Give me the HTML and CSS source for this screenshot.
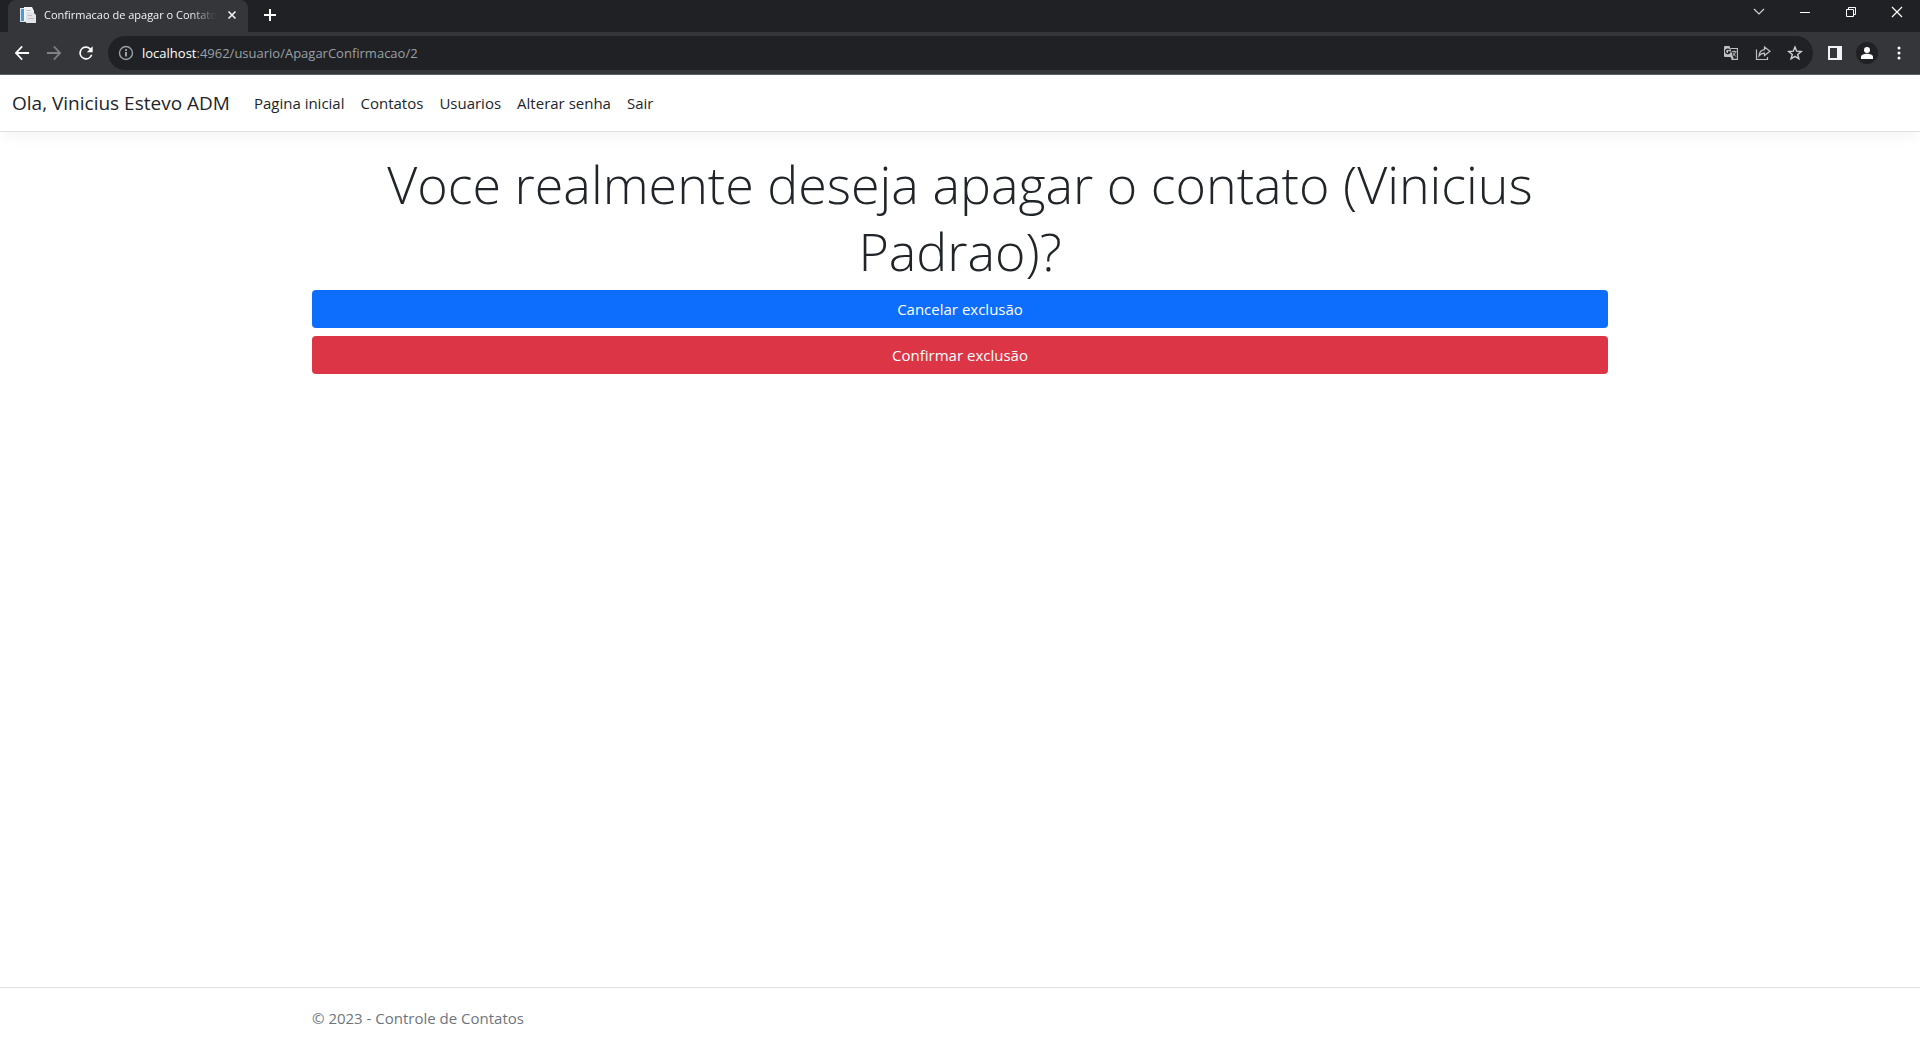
FILE: index.html
```html
<!DOCTYPE html>
<html lang="pt-BR">
<head>
<meta charset="utf-8">
<meta name="viewport" content="width=device-width, initial-scale=1">
<title>Confirmacao de apagar o Contato</title>
<link rel="stylesheet" href="styles.css">
</head>
<body>
<div class="browser">
  <div class="tabstrip">
    <div class="tab">
      <svg class="favicon" width="16" height="16" viewBox="0 0 16 16" aria-hidden="true"><path fill="#d5e3ee" d="M0 1h6v14H0z"/><path fill="#4d9bd6" d="M1 2h3v12H1z"/><path fill="#f4f4f6" d="M4 0h8l2 4v10H4z"/><path fill="#e3e3e8" d="M6 5h7l3 3v8H6z"/><path fill="#bfc1c9" d="M6 3h5v1H6zM8 8h4v1H8zM8 11h6v1H8z"/></svg>
      <span class="tab-title">Confirmacao de apagar o Contato</span>
      <button class="icon-btn tab-close" type="button" aria-label="Fechar guia"><svg width="16" height="16" viewBox="0 0 16 16"><path d="M4.500 4.500l7 7M11.500 4.500l-7 7" stroke="#f1f3f4" stroke-width="1.600" fill="none"/></svg></button>
    </div>
    <button class="icon-btn new-tab" type="button" aria-label="Nova guia"><svg width="16" height="16" viewBox="0 0 16 16"><path d="M8 2v12M2 8h12" stroke="#fff" stroke-width="2" fill="none"/></svg></button>
    <div class="window-controls">
      <button class="icon-btn" type="button" aria-label="Pesquisar guias"><svg width="12" height="12" viewBox="0 0 12 12"><path d="M1 3l5 5 5-5" stroke="#d0d1d3" stroke-width="1.200" fill="none"/></svg></button>
      <button class="icon-btn" type="button" aria-label="Minimizar"><svg width="12" height="12" viewBox="0 0 12 12"><path d="M1 6.500h10" stroke="#fff" fill="none"/></svg></button>
      <button class="icon-btn" type="button" aria-label="Restaurar"><svg width="12" height="12" viewBox="0 0 12 12"><path d="M1.500 3.500h7v7h-7zM3.500 3.500v-2h7v7h-2" stroke="#fff" fill="none"/></svg></button>
      <button class="icon-btn" type="button" aria-label="Fechar"><svg width="12" height="12" viewBox="0 0 12 12"><path d="M1 1l10 10M11 1L1 11" stroke="#fff" stroke-width="1.200" fill="none"/></svg></button>
    </div>
  </div>
  <div class="toolbar">
    <button class="icon-btn tool" type="button" aria-label="Voltar"><svg width="20" height="20" viewBox="0 0 24 24"><path fill="#fff" d="M20.500 10.800H7.300l5.600-5.900L11.500 3.400 3.300 12l8.200 8.600 1.400-1.500-5.600-5.900h13.200z"/></svg></button>
    <button class="icon-btn tool" type="button" aria-label="Avançar" disabled><svg width="20" height="20" viewBox="0 0 24 24"><path fill="#7f8184" d="M3.500 10.800h13.200l-5.600-5.900 1.400-1.500 8.200 8.600-8.200 8.600-1.400-1.500 5.600-5.900H3.500z"/></svg></button>
    <button class="icon-btn tool" type="button" aria-label="Recarregar"><svg width="20" height="20" viewBox="0 0 24 24"><path fill="#fff" d="M17.650 6.350A8 8 0 1 0 19.730 14h-2.080A6 6 0 1 1 12 6c1.660 0 3.140.690 4.220 1.780L13 11h7V4z"/></svg></button>
    <div class="omnibox">
      <svg width="16" height="16" viewBox="0 0 16 16" aria-hidden="true"><circle cx="8" cy="8" r="6.500" stroke="#9aa0a6" stroke-width="1.400" fill="none"/><path fill="#bdc1c6" d="M7.200 7h1.600v4.500H7.200zM7.200 4.300h1.600v1.600H7.200z"/></svg>
      <span class="url"><span class="host">localhost</span>:4962/usuario/ApagarConfirmacao/2</span>
      <div class="omni-actions">
        <button class="icon-btn" type="button" aria-label="Traduzir"><svg width="16" height="16" viewBox="0 0 16 16"><path fill="#bdc1c6" d="M2 1h4.500l1 3L10 12l-1 3-1.500-3H2a1 1 0 0 1-1-1V2a1 1 0 0 1 1-1z"/><path d="M7.500 3.500h6.900v10.900H9.200l1-2.400" stroke="#bdc1c6" stroke-width="1.100" fill="none"/><path d="M6.500 4.800A2.300 2.300 0 1 0 7 7H5" stroke="#202124" stroke-width="1.300" fill="none"/><path d="M9 6.700h4.500M11.200 5.500v1.200M12.500 6.700c-.3 1.700-1.200 2.900-2.600 4M9.800 8l3 3.500" stroke="#bdc1c6" fill="none"/></svg></button>
        <button class="icon-btn" type="button" aria-label="Compartilhar"><svg width="16" height="16" viewBox="0 0 16 16"><path d="M1.500 4.500v10h11V12M9.500 2l5.500 4.200-5.500 4.300V8.200C7 8.200 5.300 9 4 11c.2-3.500 2.300-5.900 5.500-6.300z" stroke="#bdc1c6" stroke-width="1.200" fill="none"/></svg></button>
        <button class="icon-btn" type="button" aria-label="Favoritar"><svg width="16" height="16" viewBox="0 0 16 16"><path d="M8 2l1.700 4.200 4.500.3-3.500 2.900 1.200 4.400L8 11.400l-3.900 2.400 1.200-4.400L1.800 6.500l4.500-.3z" stroke="#d0d3d6" stroke-width="1.400" fill="none"/></svg></button>
      </div>
    </div>
    <div class="tool-actions">
      <button class="icon-btn" type="button" aria-label="Painel lateral"><svg width="14" height="14" viewBox="0 0 14 14"><path fill="#f1f3f4" fill-rule="evenodd" d="M0 0h14v14H0zM2 2v10h7V2z"/></svg></button>
      <button class="icon-btn avatar" type="button" aria-label="Perfil"><svg width="14" height="14" viewBox="0 0 14 14"><circle cx="7" cy="4" r="3" fill="#fff"/><path fill="#fff" d="M1 13v-2c0-2 3-3.200 6-3.200s6 1.200 6 3.200v2z"/></svg></button>
      <button class="icon-btn" type="button" aria-label="Menu"><svg width="14" height="14" viewBox="0 0 14 14"><g fill="#fff"><circle cx="7" cy="2" r="1.500"/><circle cx="7" cy="7" r="1.500"/><circle cx="7" cy="12" r="1.500"/></g></svg></button>
    </div>
  </div>
</div>
<header class="navbar">
  <a class="brand" href="#">Ola, Vinicius Estevo ADM</a>
  <nav class="nav">
    <a href="#">Pagina inicial</a>
    <a href="#">Contatos</a>
    <a href="#">Usuarios</a>
    <a href="#">Alterar senha</a>
    <a href="#">Sair</a>
  </nav>
</header>
<main class="container content">
  <h1>Voce realmente deseja apagar o contato (Vinicius Padrao)?</h1>
  <a class="btn btn-primary" href="#">Cancelar exclusão</a>
  <a class="btn btn-danger" href="#">Confirmar exclusão</a>
</main>
<footer class="footer">
  <div class="container">© 2023 - Controle de Contatos</div>
</footer>
</body>
</html>
```
FILE: styles.css
```css
* { box-sizing: border-box; }
body {
  margin: 0;
  min-height: 100vh;
  display: flex;
  flex-direction: column;
  background: #fff;
  color: #212529;
  font: 15px/24px "Open Sans", "Noto Sans", sans-serif;
}
a { color: inherit; text-decoration: none; }
svg { display: block; flex: none; }

/* Browser window */
.browser { background: #35363a; border-bottom: 1px solid #5f6063; }
.tabstrip { display: flex; height: 32px; background: #202124; padding-left: 8px; }
.tab {
  display: flex;
  align-items: center;
  width: 240px;
  padding: 0 8px 2px 12px;
  background: #35363a;
  border-radius: 8px 8px 0 0;
}
.tab-title {
  flex: 1;
  min-width: 0;
  margin: 0 8px;
  overflow: hidden;
  white-space: nowrap;
  color: #f1f3f4;
  font-size: 11px;
  line-height: 16px;
  mask-image: linear-gradient(to right, #000 85%, transparent);
}
.icon-btn {
  display: flex;
  align-items: center;
  justify-content: center;
  padding: 0;
  border: 0;
  background: none;
}
.new-tab { width: 28px; margin-left: 8px; height: 30px; }
.window-controls { display: flex; margin-left: auto; height: 24px; }
.window-controls .icon-btn { width: 46px; }
.toolbar { display: flex; align-items: center; height: 42px; padding: 0 14px 0 6px; }
.tool { width: 32px; height: 32px; }
.omnibox {
  flex: 1;
  display: flex;
  align-items: center;
  gap: 8px;
  height: 34px;
  margin-left: 6px;
  padding: 0 10px;
  border-radius: 17px;
  background: #202124;
}
.url { color: #9aa0a6; font-size: 13px; line-height: 20px; }
.host { color: #fff; }
.omni-actions { display: flex; gap: 16px; margin-left: auto; }
.tool-actions { display: flex; align-items: center; gap: 14px; margin-left: 15px; }
.avatar { width: 22px; height: 22px; border-radius: 50%; background: #202124; }

/* Site */
.navbar {
  display: flex;
  align-items: center;
  gap: 24px;
  min-height: 57px;
  padding: 8px 12px;
  border-bottom: 1px solid #dee2e6;
  box-shadow: 0 8px 16px -4px rgba(0, 0, 0, .05);
}
.brand { font-size: 19px; line-height: 30px; }
.nav { display: flex; flex-wrap: wrap; gap: 16px; font-size: 15px; }
.container { width: 100%; max-width: 1320px; margin: 0 auto; padding: 0 12px; }
.content { flex: 1; margin-top: 18px; }
h1 { margin: 0 0 6px; font-size: 52px; font-weight: 300; line-height: 67px; text-align: center; }
.btn {
  display: block;
  margin-bottom: 8px;
  padding: 7px 12px;
  border-radius: 4px;
  color: #fff;
  text-align: center;
}
.btn-primary { background: #0d6efd; }
.btn-danger { background: #dc3545; }
.footer { border-top: 1px solid #dee2e6; color: #6c757d; line-height: 60px; }
```
